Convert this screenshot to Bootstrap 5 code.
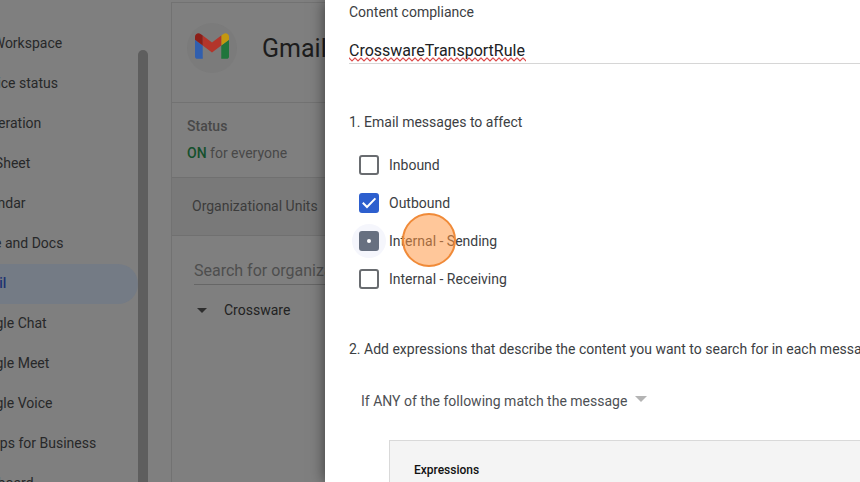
<!DOCTYPE html>
<html lang="en">
<head>
<meta charset="utf-8">
<meta name="viewport" content="width=device-width, initial-scale=1">
<title>Content compliance</title>
<link href="https://cdn.jsdelivr.net/npm/bootstrap@5.3.0/dist/css/bootstrap.min.css" rel="stylesheet">
<style>
  body { font-family: Roboto, "Liberation Sans", sans-serif; font-size: 14px; line-height: 20px; color: #3c4043; }
  .backdrop-pane { flex: 0 0 325px; background: #7f7f7f; color: #272829; }
  .side-menu { flex: 0 0 138px; padding-top: 24px; }
  .side-menu .nav-link { flex: 0 0 40px; padding: 9px 0; margin-left: -30px; color: #272829; white-space: nowrap; }
  .side-menu .nav-link.top-level { margin-left: -55px; }
  .side-menu .nav-link.active { background: #747b85; color: #1e3272; font-weight: 500; border-radius: 0 20px 20px 0; }
  .scroll-thumb { flex: 0 0 10px; margin-top: 50px; background: #5e5e5e; border-radius: 5px 5px 0 0; }
  .app-panel { margin: 2px 0 0 23px; border: 1px solid #727272; border-width: 1px 0 0 1px; min-width: 0; }
  .app-title { height: 100px; padding: 20px 0 0 15px; gap: 25px; border-bottom: 1px solid #727272; }
  .app-logo { width: 50px; height: 50px; padding-bottom: 4px; background: #7b7b7b; }
  .app-title h1 { font-size: 25px; line-height: 52px; font-weight: 400; color: #1c1c1c; }
  .app-status { height: 75px; padding: 13px 15px 0; border-bottom: 1px solid #707070; color: #484848; }
  .app-status dt { font-weight: 500; line-height: 20px; margin-bottom: 7px; color: #484848; }
  .on-state { color: #14502c; }
  .units-head { height: 58px; padding: 18px 0 0 20px; background: #797979; border-bottom: 1px solid #707070; color: #3c3c3c; }
  .unit-search { margin: 20px 0 0 22px; }
  .unit-search input { width: 100%; height: 29px; padding: 0; border: 0; border-bottom: 1px solid #666; background: none; font-size: 16px; color: #272829; }
  .unit-search input::placeholder { color: #4e4e4e; opacity: 1; }
  .unit-row { margin: 15px 0 0 25px; gap: 17px; color: #222; }
  .tri { width: 0; height: 0; border: 5px solid transparent; border-bottom: 0; border-top-color: #2e2e2e; }
  .tri-select { border-width: 6px 6px 0; border-top-color: #b4b4b4; }
  .drawer { position: relative; min-width: 0; padding: 2px 0 0 24px; background: #fff; box-shadow: 0 0 14px rgba(0,0,0,.55); }
  .drawer h2, .drawer legend { font-size: 14px; line-height: 20px; font-weight: 400; margin: 0; white-space: nowrap; }
  .drawer legend { float: none; }
  .rule-name { display: block; width: 100%; height: 27px; padding: 0; border: 0; border-bottom: 1px solid #d6d6d6; font-size: 16px; color: #202124; }
  .name-field { margin-top: 15px; }
  .squiggle { position: absolute; left: 0; top: 20px; width: 177px; height: 5px; }
  .affect { margin-top: 48px; }
  .checks { margin: 23px 0 0 10px; gap: 18px; }
  .check-row { gap: 10px; }
  .check-row input { appearance: none; width: 20px; height: 20px; margin: 0; border: 2px solid #696c70; border-radius: 3px; background: #fff center/20px no-repeat; }
  .check-row .box-on { border-color: #2d5fce; background-color: #2d5fce; background-origin: border-box; background-image: url("data:image/svg+xml,%3Csvg xmlns='http://www.w3.org/2000/svg' viewBox='0 0 20 20'%3E%3Cpath d='M3.800 9.800l4.200 4.200 8.400-8.600' fill='none' stroke='white' stroke-width='2'/%3E%3C/svg%3E"); }
  .check-row .box-dot { border-color: #677080; background-color: #677080; background-origin: border-box; background-image: url("data:image/svg+xml,%3Csvg xmlns='http://www.w3.org/2000/svg' viewBox='0 0 20 20'%3E%3Ccircle cx='10' cy='10' r='2' fill='white'/%3E%3C/svg%3E"); box-shadow: 0 0 0 7px #f5f6fc; clip-path: circle(17px); }
  .click-spot { position: absolute; left: 43px; top: -18px; width: 54px; height: 54px; border: 2px solid #f08a38; background: rgba(255,148,61,.52); }
  .express { margin-top: 50px; }
  .match { margin: 32px 0 0 12px; gap: 7px; }
  .match select { appearance: none; border: 0; padding: 0; background: none; color: #4d5054; font-size: 14px; line-height: 20px; }
  .express-box { margin: 29px 0 0 40px; padding: 19px 24px; border: 1px solid #d9d9d9; border-width: 1px 0 0 1px; background: #f4f4f4; }
  .express-box h3 { font-size: 12px; line-height: 20px; font-weight: 500; color: #111; margin: 0; }
</style>
<script src="https://cdn.jsdelivr.net/npm/bootstrap@5.3.0/dist/js/bootstrap.bundle.min.js"></script>
</head>
<body>
<div class="d-flex vh-100 overflow-hidden">
  <div class="backdrop-pane d-flex overflow-hidden">
    <nav class="side-menu nav flex-column flex-nowrap" aria-label="Apps">
      <a class="nav-link top-level" href="#">Google Workspace</a>
      <a class="nav-link" href="#">Service status</a>
      <a class="nav-link" href="#">Moderation</a>
      <a class="nav-link" href="#">AppSheet</a>
      <a class="nav-link" href="#">Calendar</a>
      <a class="nav-link" href="#">Drive and Docs</a>
      <a class="nav-link active" href="#" aria-current="page">Gmail</a>
      <a class="nav-link" href="#">Google Chat</a>
      <a class="nav-link" href="#">Google Meet</a>
      <a class="nav-link" href="#">Google Voice</a>
      <a class="nav-link" href="#">Groups for Business</a>
      <a class="nav-link" href="#">Jamboard</a>
    </nav>
    <div class="scroll-thumb"></div>
    <section class="app-panel flex-grow-1">
      <header class="app-title d-flex align-items-start">
        <div class="app-logo rounded-circle d-flex align-items-center justify-content-center flex-shrink-0">
          <svg width="34" height="26" viewBox="52 42 88 66" aria-hidden="true">
            <path fill="#315fae" d="M58 108h14V74L52 59v43c0 3.320 2.690 6 6 6"/>
            <path fill="#20753c" d="M120 108h14c3.320 0 6-2.690 6-6V59l-20 15"/>
            <path fill="#c4980f" d="M120 48v26l20-15v-8c0-7.420-8.470-11.650-14.400-7.200"/>
            <path fill="#b3352b" d="M72 74V48l24 18 24-18v26L96 92"/>
            <path fill="#8c1e18" d="M52 51v8l20 15V48l-5.600-4.200c-5.940-4.450-14.400-.220-14.400 7.200"/>
          </svg>
        </div>
        <h1 class="mb-0">Gmail</h1>
      </header>
      <dl class="app-status mb-0">
        <dt>Status</dt>
        <dd class="mb-0 text-nowrap"><span class="on-state fw-medium">ON</span> for everyone</dd>
      </dl>
      <div class="units-head text-nowrap">Organizational Units</div>
      <div class="unit-search"><input type="text" aria-label="Search for organizational units" placeholder="Search for organizational units"></div>
      <div class="unit-row d-flex align-items-center"><span class="tri"></span><span>Crossware</span></div>
    </section>
  </div>

  <main class="drawer flex-grow-1">
    <h2><label for="ruleName">Content compliance</label></h2>
    <div class="name-field position-relative">
      <input class="rule-name" id="ruleName" type="text" value="CrosswareTransportRule" spellcheck="false">
      <svg class="squiggle" aria-hidden="true">
        <defs><pattern id="wave" width="6" height="5" patternUnits="userSpaceOnUse"><path d="M-1 0L0 1l3 3 3-3 1-1" fill="none" stroke="#dc4b4b" stroke-width="1.200"/></pattern></defs>
        <rect width="177" height="5" fill="url(#wave)"/>
      </svg>
    </div>
    <fieldset class="affect">
      <legend>1. Email messages to affect</legend>
      <div class="checks d-flex flex-column">
        <div class="check-row d-flex align-items-center"><input type="checkbox" id="c1"><label for="c1">Inbound</label></div>
        <div class="check-row d-flex align-items-center"><input class="box-on" type="checkbox" id="c2" checked><label for="c2">Outbound</label></div>
        <div class="check-row d-flex align-items-center position-relative"><input class="box-dot" type="checkbox" id="c3"><label for="c3">Internal - Sending</label><span class="click-spot rounded-circle"></span></div>
        <div class="check-row d-flex align-items-center"><input type="checkbox" id="c4"><label for="c4">Internal - Receiving</label></div>
      </div>
    </fieldset>
    <section class="express">
      <h2>2. Add expressions that describe the content you want to search for in each message</h2>
      <div class="match d-flex align-items-center">
        <select aria-label="Match mode"><option>If ANY of the following match the message</option></select>
        <span class="tri tri-select mb-1"></span>
      </div>
      <div class="express-box"><h3>Expressions</h3></div>
    </section>
  </main>
</div>
</body>
</html>
